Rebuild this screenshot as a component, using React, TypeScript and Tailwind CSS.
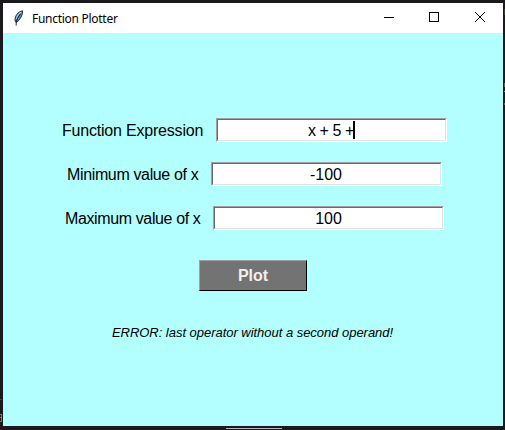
import React from "react";

type FieldProps = {
  label: string;
  value: string;
  caret?: boolean;
  labelClass: string;
  valueClass?: string;
};

function Field({ label, value, caret, labelClass, valueClass = "" }: FieldProps) {
  return (
    <div className="flex items-center justify-center gap-[13px] pl-[3px]">
      <label className={`whitespace-nowrap pt-0.5 ${labelClass}`}>{label}</label>
      <div className="h-6 w-[231px] border border-t-[#a0a0a0] border-l-[#a0a0a0] border-r-white border-b-white">
        <div className="flex h-full items-center justify-center border border-t-[#696969] border-l-[#696969] border-r-[#e3e3e3] border-b-[#e3e3e3] bg-white">
          <span className={`whitespace-pre pt-0.5 ${valueClass}`}>{value}</span>
          {caret && <span className="-ml-px h-[18px] w-[2px] bg-black" />}
        </div>
      </div>
    </div>
  );
}

function Feather() {
  return (
    <svg className="h-4 w-4" viewBox="0 0 16 16">
      <path d="M11.5.7 8.4 1.9 5.4 4.8 4 8.8l.2 2.7 1.1.8 2.2-1.6 2.6-3.6 1.3-3.5z" fill="#4f8ccf" stroke="#2c3137" strokeWidth="1" />
      <path d="M10 2 6.8 5.2 5.3 9" stroke="#a9d0ef" strokeWidth="1.1" fill="none" />
      <path d="M9.5 3.8 6.6 8.2 5.2 12v3.6" stroke="#111" strokeWidth=".9" fill="none" />
    </svg>
  );
}

function DesktopEdges() {
  return (
    <svg className="pointer-events-none absolute inset-0 h-[430px] w-[505px]" viewBox="0 0 505 430" shapeRendering="crispEdges">
      <path d="M226 428h56v1h-56z" fill="#b8b8b8" />
      <path d="M0 399h2v1H0z" fill="#444" />
      <path d="M0 414h2v8H0v-1h1v-3H0v-1h1v-2H0z" fill="#777" />
      <path d="M504 83h1v4h-1zM504 103h1v2h-1z" fill="#85533f" />
      <path d="M504 91h1v1h-1z" fill="#999" />
      <path d="M504 9h1v6h-1z" fill="#36412c" />
    </svg>
  );
}

export default function App() {
  return (
    <div className="relative flex h-[430px] w-[505px] flex-col overflow-hidden bg-[#1b191b] pt-[3px] pr-[2px] pb-1 pl-[3px] font-['Liberation_Sans',Arial,sans-serif] text-[16px] leading-5 text-black">
      <header className="flex h-[30px] shrink-0 items-center justify-between bg-white pl-2">
        <div className="flex items-center gap-[5px]">
          <Feather />
          <h1 className="whitespace-nowrap pt-px font-['Noto_Sans','Open_Sans',sans-serif] text-[12px] tracking-[-0.28px]">Function Plotter</h1>
        </div>
        <svg className="h-[30px] w-[138px]" viewBox="0 0 138 30" fill="none" stroke="black" shapeRendering="crispEdges">
          <path d="M19 14.5h10" />
          <path d="M64.5 9.5h9v9h-9z" />
          <path d="m110 9 10 10m0-10-10 10" shapeRendering="auto" />
        </svg>
      </header>
      <main className="flex grow flex-col items-center bg-[#b3ffff] pt-[85px]">
        <form className="flex flex-col items-center gap-[30px]">
          <div className="flex flex-col gap-5">
            <Field label="Function Expression" value="x + 5 +" caret labelClass="w-[141px] tracking-[-0.2px]" valueClass="tracking-[-0.4px]" />
            <Field label="Minimum value of x" value="-100" labelClass="w-[131px] tracking-[-0.36px]" valueClass="pr-px" />
            <Field label="Maximum value of x" value="100" labelClass="w-[135px] tracking-[-0.38px]" />
          </div>
          <button type="button" className="flex h-[31px] w-[108px] items-center justify-center border border-t-[#a0a0a0] border-l-[#a0a0a0] border-r-black border-b-black bg-[#737373] font-bold text-[#f0f0f0]">
            Plot
          </button>
        </form>
        <p className="mt-8 whitespace-nowrap pr-px text-[13px] tracking-[-0.03px] italic">ERROR: last operator without a second operand!</p>
      </main>
      <DesktopEdges />
    </div>
  );
}
